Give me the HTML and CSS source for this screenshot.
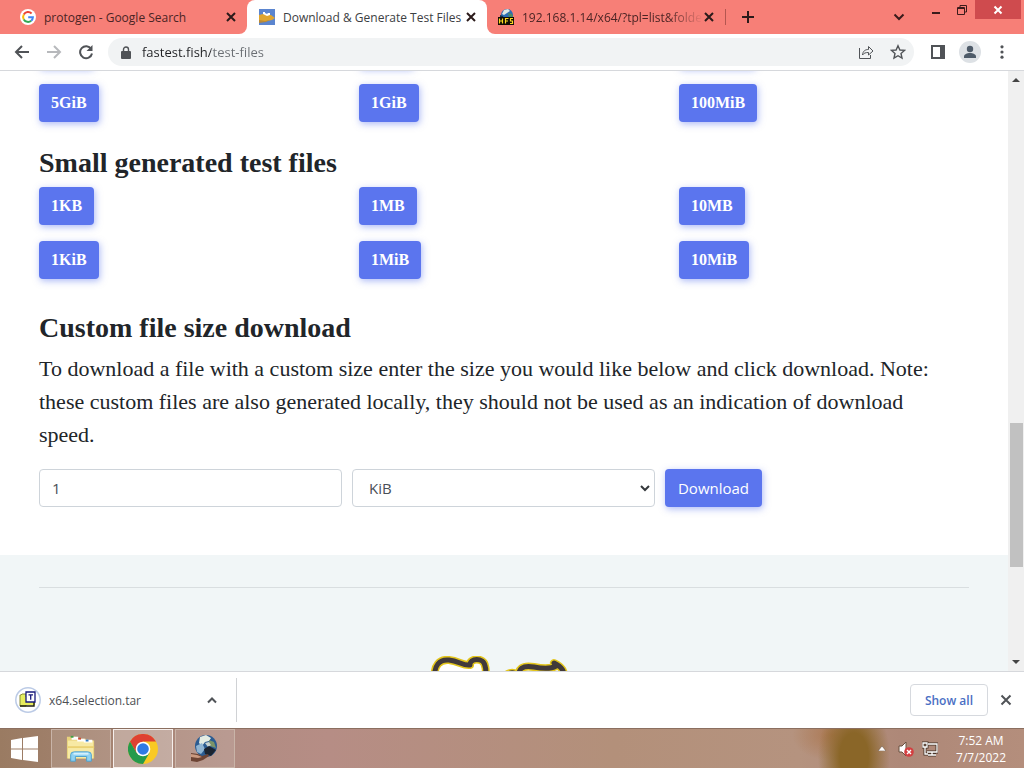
FILE: index.html
```html
<!DOCTYPE html>
<html lang="en">
<head>
<meta charset="utf-8">
<meta name="viewport" content="width=device-width, initial-scale=1">
<title>Download &amp; Generate Test Files</title>
<link rel="stylesheet" href="styles.css">
</head>
<body>
<header class="tabstrip">
  <div class="tabs">
    <div class="tab">
      <svg class="favicon" viewBox="0 0 16 16"><circle cx="8" cy="8" r="8" fill="#fff"/><g fill="none" stroke-width="2"><path d="M3.800 5.500A4.900 4.900 0 0 1 11.600 4.500" stroke="#ea4335"/><path d="M3.800 5.500A4.900 4.900 0 0 0 3.800 10.500" stroke="#fbbc05"/><path d="M3.800 10.500A4.900 4.900 0 0 0 11.200 11.700" stroke="#34a853"/><path d="M11.200 11.700A4.900 4.900 0 0 0 12.900 8.200H8.200" stroke="#4285f4"/></g></svg>
      <span class="tab-title">protogen - Google Search</span>
      <button class="tab-close" aria-label="Close tab"><svg viewBox="0 0 10 10"><path d="M1 1l8 8M9 1l-8 8"/></svg></button>
    </div>
    <div class="tab tab-active">
      <svg class="favicon" viewBox="0 0 16 16"><path fill="#5b85cf" d="M0 0h16v16H0z"/><path fill="#e0a52e" d="M0 6l4-1 4 1h4l4 3-3 2-5 1-8 1z"/><path fill="#b98a38" d="M0 11l6 1 5-1-4 2-7 1z"/><path fill="#fff" d="M4 3h2v1l2 1 1-1h2v2l-3 1-4-2z"/></svg>
      <span class="tab-title">Download &amp; Generate Test Files</span>
      <button class="tab-close" aria-label="Close tab"><svg viewBox="0 0 10 10"><path d="M1 1l8 8M9 1l-8 8"/></svg></button>
    </div>
    <div class="tab tab-last">
      <svg class="favicon" viewBox="0 0 16 16"><circle cx="9" cy="6" r="6" fill="#2c6db4"/><path fill="#dfe9e4" d="M6 1l4-1 2 2-3 2-3 2-2-1z"/><path fill="#4b8b62" d="M10 4l4 1 1 3h-4z"/><path fill="#12304d" d="M2 6l3 1 1 3H2z"/><path fill="#100c04" d="M0 8h16v8H0z"/><path d="M1.500 9.500v5M4.500 9.500v5M1.500 12h3M7.500 14.500v-5h3M7.500 12h2.500M15 9.500h-2.500v2.500h2v2.500h-2.500" fill="none" stroke="#ffd91f" stroke-width="1.200"/></svg>
      <span class="tab-title tab-fade">192.168.1.14/x64/?tpl=list&amp;folde</span>
      <button class="tab-close" aria-label="Close tab"><svg viewBox="0 0 10 10"><path d="M1 1l8 8M9 1l-8 8"/></svg></button>
    </div>
    <button class="new-tab" aria-label="New tab"><svg viewBox="0 0 12 12"><path d="M6 0v12M0 6h12"/></svg></button>
  </div>
  <div class="window-controls">
    <button class="tab-search" aria-label="Search tabs"><svg viewBox="0 0 12 8"><path d="M1.500 1.500L6 6l4.500-4.500"/></svg></button>
    <button class="win-btn" aria-label="Minimize"><svg viewBox="0 0 12 12"><path d="M2 9h8"/></svg></button>
    <button class="win-btn" aria-label="Restore"><svg class="thin" viewBox="0 0 12 12"><path d="M1.500 3.500h7v7h-7zM1.500 4.500h7M4 3V1.500h6.500V8H9"/></svg></button>
    <button class="win-btn win-close" aria-label="Close"><svg viewBox="0 0 12 12"><path d="M2.500 2.500l7 7M9.500 2.500l-7 7"/></svg></button>
  </div>
</header>

<nav class="toolbar" aria-label="Navigation">
  <button class="tool" aria-label="Back"><svg viewBox="0 0 16 16"><path d="M15 8H2M8 2L2 8l6 6"/></svg></button>
  <button class="tool tool-off" aria-label="Forward"><svg viewBox="0 0 16 16"><path d="M1 8h13M8 2l6 6-6 6"/></svg></button>
  <button class="tool" aria-label="Reload"><svg viewBox="0 0 16 16"><path d="M13.200 5A6 6 0 1 0 14 9.500"/><path d="M14.500 1v6h-6z" fill="#505357" stroke="none"/></svg></button>
  <div class="omnibox">
    <svg class="lock" viewBox="0 0 10 13"><path fill="#4f5256" d="M1 5h8a1 1 0 0 1 1 1v6a1 1 0 0 1-1 1H1a1 1 0 0 1-1-1V6a1 1 0 0 1 1-1z"/><path d="M2.500 5V3.500a2.500 2.500 0 0 1 5 0V5" fill="none" stroke="#4f5256" stroke-width="1.400"/></svg>
    <input class="url" type="text" aria-label="Address" value="fastest.fish/test-files">
    <button class="tool" aria-label="Share"><svg class="thin" viewBox="0 0 16 16"><path d="M1.500 4v10.500h11V11M4.500 11c.4-4 2.600-5.500 6-5.500V2.500L15 7l-4.500 4V8.500c-3 0-4.700.6-6 2.500z"/></svg></button>
    <button class="tool" aria-label="Bookmark"><svg viewBox="0 0 16 16"><path d="M8 1.800l1.900 4.200 4.600.4-3.500 3.100 1 4.600L8 11.700l-4 2.400 1-4.600L1.500 6.400l4.600-.4z" stroke-width="1.400"/></svg></button>
  </div>
  <button class="tool" aria-label="Side panel"><svg viewBox="0 0 16 16"><path d="M2 2h12v12H2z"/><path d="M10 1h5v14h-5z" fill="#505357" stroke="none"/></svg></button>
  <button class="tool avatar" aria-label="Profile"><svg viewBox="0 0 22 22"><circle cx="11" cy="11" r="11" fill="#dde1e5"/><circle cx="11" cy="8" r="3.200" fill="#4e5b69"/><path d="M5 17v-1.500c0-2.300 3-3.500 6-3.500s6 1.200 6 3.500V17z" fill="#4e5b69"/></svg></button>
  <button class="tool" aria-label="Menu"><svg viewBox="0 0 16 16"><g fill="#505357" stroke="none"><circle cx="8" cy="2.800" r="1.600"/><circle cx="8" cy="8" r="1.600"/><circle cx="8" cy="13.200" r="1.600"/></g></svg></button>
</nav>

<div class="viewport">
  <main class="page">
    <section class="content">
      <div class="grid grid-cut" aria-hidden="true">
        <div><span class="cut-btn"></span></div><div><span class="cut-btn"></span></div><div><span class="cut-btn cut-wide"></span></div>
      </div>
      <div class="grid">
        <div><a class="btn" href="#5gib">5GiB</a></div>
        <div><a class="btn" href="#1gib">1GiB</a></div>
        <div><a class="btn" href="#100mib">100MiB</a></div>
      </div>
      <h2 class="heading">Small generated test files</h2>
      <div class="grid">
        <div><a class="btn" href="#1kb">1KB</a></div>
        <div><a class="btn" href="#1mb">1MB</a></div>
        <div><a class="btn" href="#10mb">10MB</a></div>
        <div><a class="btn" href="#1kib">1KiB</a></div>
        <div><a class="btn" href="#1mib">1MiB</a></div>
        <div><a class="btn" href="#10mib">10MiB</a></div>
      </div>
      <h2 class="heading heading-custom">Custom file size download</h2>
      <p class="lead">To download a file with a custom size enter the size you would like below and click download. Note: these custom files are also generated locally, they should not be used as an indication of download speed.</p>
      <form class="size-form">
        <input class="field" type="text" aria-label="File size" value="1">
        <div class="select-wrap">
          <select class="field select" aria-label="Unit"><option>KiB</option></select>
          <svg class="chevron" viewBox="0 0 10 7"><path d="M1 1l4 4 4-4"/></svg>
        </div>
        <button class="btn btn-ui" type="button">Download</button>
      </form>
    </section>
    <footer class="footer">
      <hr class="rule">
      <svg class="logo" viewBox="0 0 146 50" aria-hidden="true">
        <g stroke-linejoin="round" stroke-linecap="round">
          <path fill="#fff" d="M4 24C2 9 9 3 18 4c10 1 14 6 21 5-1-7 14-8 15 1 2 5 0 9 0 14z"/>
          <g fill="none" stroke="#e3c51d" stroke-width="8"><path d="M4 24C2 9 9 3 18 4c10 1 14 6 21 5-1-7 14-8 15 1 2 5 0 9 0 14"/><path d="M74 22c1-5 8-7 12-3M88 24C86 12 92 9 103 11c10 2 17 2 22-1l-2-3c8 4 11 8 10 17"/></g>
          <g fill="none" stroke="#41393a" stroke-width="5"><path d="M4 24C2 9 9 3 18 4c10 1 14 6 21 5-1-7 14-8 15 1 2 5 0 9 0 14"/><path d="M74 22c1-5 8-7 12-3M88 24C86 12 92 9 103 11c10 2 17 2 22-1l-2-3c8 4 11 8 10 17"/></g>
          <path d="M62 17h6" stroke="#e9a366" stroke-width="3"/>
        </g>
      </svg>
    </footer>
  </main>
  <div class="scrollbar" aria-hidden="true">
    <svg class="arrow" viewBox="0 0 8 4"><path d="M0 4l4-4 4 4z"/></svg>
    <div class="track"><div class="thumb"></div></div>
    <svg class="arrow" viewBox="0 0 8 4"><path d="M0 0l4 4 4-4z"/></svg>
  </div>
</div>

<section class="downloads" aria-label="Downloads">
  <div class="download">
    <svg class="file-icon" viewBox="0 0 26 26"><circle cx="13" cy="13" r="12.200" fill="#fff" stroke="#bccbe6" stroke-width="1.500"/><path d="M5 8h1l1-1h4v12H5z" fill="#e3ef62" stroke="#8a8c3a"/><path d="M7 10h13v8H7z" fill="#e8ec5c"/><path d="M5 19h14v-4" fill="none" stroke="#20200e" stroke-width="1.400"/><path d="M11 5h9v10h-9z" fill="#fff" stroke="#16187c" stroke-width="1.300"/><path d="M13.500 7.800h4.500M15.700 7.800v5" stroke="#16187c" stroke-width="1.300"/></svg>
    <span class="download-name">x64.selection.tar</span>
    <button class="tool" aria-label="Download options"><svg viewBox="0 0 16 16"><path d="M4 10.500l4-4 4 4"/></svg></button>
  </div>
  <button class="show-all">Show all</button>
  <button class="tool" aria-label="Close downloads bar"><svg viewBox="0 0 16 16"><path d="M3.500 3.500l9 9M12.500 3.500l-9 9"/></svg></button>
</section>

<footer class="taskbar">
  <button class="start" aria-label="Start"><svg viewBox="0 0 27 26"><path fill="#fff" d="M0 4l11-2v10.500H0zM12 2l15-2v12.500H12zM0 13.500h11V24L0 22zM12 13.500h15V26l-15-2z"/></svg></button>
  <button class="task" aria-label="File Explorer"><svg viewBox="0 0 32 30"><path fill="#e8d27c" d="M1 2h9l1 2h10l1 2h8v19H1z"/><path fill="#f7e9a4" d="M2 6h27v19H2z"/><path fill="#fff" d="M6 2h7v3H6zM12 4h8v3h-8zM19 5h9v3h-9z"/><path fill="#42a047" d="M5 1h3v2H5z"/><path fill="#d14b32" d="M13 3h3v2h-3z"/><path fill="#347bc1" d="M21 5h3v2h-3z"/><path fill="#ead173" d="M2 12h28v2H2z"/><path d="M5 28v-7q0-3 4-3h14q4 0 4 3v7h-5v-5H10v5z" fill="#8fd2f2" stroke="#4b9fcd"/><path fill="#d4f0fc" d="M8 19h16v2H8z"/></svg></button>
  <button class="task task-active" aria-label="Chrome"><svg viewBox="0 0 30 30"><circle cx="15" cy="15" r="15" fill="#f9c923"/><path fill="#df4032" d="M2 7.500A15 15 0 0 1 28 7.500H15L8.500 19z"/><path fill="#269a4c" d="M2 7.500A15 15 0 0 0 15 30l6.500-11.200L15 22l-6.500-3.300z"/><circle cx="15" cy="15" r="7.300" fill="#fff"/><circle cx="15" cy="15" r="5.800" fill="#2f7ae5"/></svg></button>
  <button class="task" aria-label="HFS"><svg viewBox="0 0 30 30"><circle cx="16" cy="12" r="11" fill="#2b5c92"/><path fill="#e4ece3" d="M10 3l6-2 5 3-2 3-4 1-3 4-3-3z"/><path fill="#8fb4d2" d="M6 12l6-3 3 6-4 5-4-2z"/><path fill="#7d9468" d="M19 6l5 2 2 6-6-2z"/><path fill="#c8d3cf" d="M15 9l4-1 2 3-3 2z"/><path fill="#1b2430" d="M14 15l5-3 7 4-5 6-6-2z"/><path fill="#6d4434" d="M1 19l7 1 4 2 6-2 1 2-6 4-6 2-6-1z"/><path fill="#cb9a80" d="M1 20l6 1 5 2-4 1-7-1z"/></svg></button>
  <div class="tray">
    <svg class="tray-up" viewBox="0 0 8 5"><path fill="#fff" stroke="#5c4638" stroke-width=".5" d="M0 5l4-5 4 5z"/></svg>
    <svg class="tray-icon" viewBox="0 0 16 16"><path d="M1 5h3l4-4v14l-4-4H1z" fill="#fff" stroke="#68503f"/><circle cx="11" cy="11" r="4.800" fill="#d33f40"/><path d="M9 9l4 4M13 9l-4 4" stroke="#fff" stroke-width="1.400"/></svg>
    <svg class="tray-icon" viewBox="0 0 16 16"><g fill="none" stroke="#473428" stroke-width="3"><path d="M6 3h9v8H5M10 11v3M6 14h8M1 2h4v4H1zM3 6v7h3"/></g><g fill="none" stroke="#fff" stroke-width="1.300"><path d="M6 3h9v8H5M10 11v3M6 14h8M1 2h4v4H1zM3 6v7h3"/></g></svg>
    <div class="clock"><span>7:52 AM</span><span>7/7/2022</span></div>
  </div>
</footer>
</body>
</html>
```
FILE: styles.css
```css
* { box-sizing: border-box; }
body {
  margin: 0;
  height: 100vh;
  display: flex;
  flex-direction: column;
  overflow: hidden;
  background: #fff;
  color: #212529;
  font-family: "Segoe UI", "Open Sans", sans-serif;
  font-size: 12px;
}
button {
  border: 0;
  padding: 0;
  background: none;
  color: inherit;
  font: inherit;
}
svg { display: block; flex: none; }

/* tab strip */
.tabstrip {
  flex: none;
  display: flex;
  justify-content: space-between;
  height: 34px;
  background: #f77f77;
}
.tabs {
  display: flex;
  flex: 1;
  min-width: 0;
  background: linear-gradient(#fff, #fff) 230px 24px / 270px 10px no-repeat;
}
.tab {
  flex: 0 1 240px;
  min-width: 0;
  display: flex;
  align-items: center;
  padding: 0 10px 0 12px;
  background: #f77f77;
  color: #4b2424;
}
.tab:first-child { flex-basis: 247px; padding-left: 20px; border-radius: 0 0 8px 0; }
.tab-active { background: #fff; border-radius: 8px 8px 0 0; color: #3c4043; }
.tab-last { flex-basis: 238px; padding-left: 11px; border-radius: 0 0 0 8px; }
.favicon { width: 16px; height: 16px; margin-right: 8px; }
.tab-title { flex: 1; min-width: 0; overflow: hidden; white-space: nowrap; }
.tab-fade { mask-image: linear-gradient(to right, #000 80%, transparent); }
.tab-close { width: 12px; height: 12px; display: grid; place-items: center; }
.tab-close svg { width: 10px; height: 10px; }
.tab-close path, .new-tab path { fill: none; stroke: #2b1a1a; stroke-width: 2; }
.new-tab {
  align-self: center;
  height: 16px;
  padding: 0 16px;
  border-left: 1px solid #b45650;
}
.new-tab svg { width: 12px; height: 12px; }
.window-controls { display: flex; align-items: flex-start; padding-right: 3px; }
.tab-search { height: 34px; padding: 0 18px; }
.tab-search svg { width: 12px; height: 8px; }
.win-btn { width: 26px; height: 19px; display: grid; place-items: center; }
.win-btn svg { width: 12px; height: 12px; }
.window-controls path { fill: none; stroke: #3a1b1b; stroke-width: 2; }
.window-controls .thin path { stroke-width: 1; }
.win-close { width: 46px; background: #cf4b4e; }
.window-controls .win-close path { stroke: #fff; }

/* toolbar */
.toolbar {
  flex: none;
  display: flex;
  align-items: center;
  gap: 8px;
  height: 37px;
  padding: 0 10px;
  border-bottom: 1px solid #d6d8dc;
}
.tool { width: 24px; height: 24px; display: grid; place-items: center; }
.tool svg { width: 16px; height: 16px; fill: none; stroke: #505357; stroke-width: 2; }
.tool .thin { stroke-width: 1; }
.tool-off svg { stroke: #b7b9bc; }
.avatar svg { width: 22px; height: 22px; stroke: none; }
.omnibox {
  flex: 1;
  display: flex;
  align-items: center;
  gap: 8px;
  height: 28px;
  margin: 0 4px 0 2px;
  padding: 0 4px 0 13px;
  border-radius: 14px;
  background: #f1f3f4;
}
.lock { width: 10px; height: 13px; }
.url {
  flex: 1;
  min-width: 0;
  height: 24px;
  padding: 0 0 0 3px;
  border: 0;
  outline: 0;
  font: 13px "Segoe UI", "Open Sans", sans-serif;
  color: #202124;
  background: linear-gradient(to right, #202124 72px, #6a6e73 72px);
  background-clip: text;
  -webkit-background-clip: text;
  -webkit-text-fill-color: transparent;
}

/* page */
.viewport { flex: 1; min-height: 0; display: flex; }
.page { flex: 1; min-width: 0; display: flex; flex-direction: column; overflow: hidden; }
.content { flex: none; padding: 0 39px 48px; }
.grid { display: grid; grid-template-columns: repeat(3, 1fr); gap: 16px 30px; }
.grid-cut { height: 38px; margin: -41px 0 16px; }
.btn, .cut-btn {
  display: inline-block;
  height: 38px;
  border-radius: 4px;
  background: #5b75ee;
  box-shadow: 1px 2px 7px rgba(91, 117, 238, .5);
}
.cut-btn { width: 54px; }
.cut-wide { width: 76px; }
.btn {
  padding: 0 12px;
  color: #fff;
  font: bold 16px/38px Georgia, "Liberation Serif", serif;
  text-decoration: none;
  vertical-align: top;
}
.btn-ui { padding: 0 13px; font: 15px/38px "Segoe UI", "Open Sans", sans-serif; }
.heading {
  margin: 24px 0 8px;
  font: bold 28px/33px "Liberation Serif", serif;
}
.heading-custom { margin-top: 32px; }
.lead {
  margin: 0 0 18px;
  padding-right: 16px;
  font: 22px/33px Georgia, "Liberation Serif", serif;
}
.size-form { display: flex; gap: 10px; }
.field {
  flex: 0 0 calc(33.333% - 7px);
  min-width: 0;
  height: 38px;
  padding: 0 12px;
  border: 1px solid #ced4da;
  border-radius: 4px;
  background: #fff;
  color: #495057;
  font: 15px "Segoe UI", "Open Sans", sans-serif;
}
.select-wrap { position: relative; flex: 0 0 calc(33.333% - 7px); }
.select { width: 100%; padding: 0 16px; appearance: none; }
.chevron { position: absolute; right: 5px; top: 16px; width: 10px; height: 7px; pointer-events: none; }
.chevron path { fill: none; stroke: #34383c; stroke-width: 2; }
.footer { flex: 1 0 auto; padding: 32px 39px 0; background: #f1f6f7; }
.rule { margin: 0 0 68px; border: 0; border-top: 1px solid #d9dee0; }
.logo { width: 146px; height: 50px; margin: 0 auto; }
.scrollbar {
  flex: 0 0 16px;
  display: flex;
  flex-direction: column;
  align-items: center;
  padding: 7px 0;
  background: #f0f0f0;
}
.arrow { width: 8px; height: 4px; fill: #444; }
.track { flex: 1; width: 13px; display: flex; flex-direction: column; }
.thumb { margin-top: 341px; height: 144px; background: #c1c1c1; }

/* downloads */
.downloads {
  flex: none;
  display: flex;
  align-items: center;
  gap: 6px;
  height: 57px;
  padding: 0 6px 0 15px;
  border-top: 1px solid #d6d8dc;
  background: #fff;
}
.download {
  flex: 0 0 222px;
  display: flex;
  align-items: center;
  gap: 8px;
  height: 44px;
  padding-right: 12px;
  border-right: 1px solid #d0d2d5;
  color: #4d5054;
}
.file-icon { width: 26px; height: 26px; }
.download-name { flex: 1; }
.show-all {
  height: 32px;
  margin-left: auto;
  padding: 0 14px;
  border: 1px solid #d6d9de;
  border-radius: 4px;
  color: #4a6fc4;
  font-weight: 600;
}

/* taskbar */
.taskbar {
  flex: none;
  display: flex;
  gap: 2px;
  height: 40px;
  border-top: 1px solid #8b6f60;
  background:
    radial-gradient(ellipse 36px 60px at 854px 28px, #8a6628 40%, transparent),
    radial-gradient(ellipse 40px 26px at 832px 6px, rgba(168, 106, 56, .6), transparent),
    linear-gradient(to right, #9a7b62, #b08c82 22%, #b68d85 32%, #b3907a 60%, #b5937f 78%, #ae8878 88%, #b48e7c);
}
.start { width: 49px; display: grid; place-items: center; }
.start svg { width: 27px; height: 26px; }
.task {
  width: 60px;
  display: grid;
  place-items: center;
  border: 1px solid #c9b4a8;
  background: rgba(255, 255, 255, .12);
}
.task svg { width: 30px; height: 30px; }
.task-active { border-color: #f6efec; background: rgba(255, 255, 255, .3); }
.tray { margin-left: auto; display: flex; align-items: center; gap: 8px; padding-right: 18px; color: #fff; }
.tray-up { width: 8px; height: 5px; margin-right: 4px; }
.tray-icon { width: 16px; height: 16px; }
.clock { display: flex; flex-direction: column; align-items: center; padding-left: 10px; line-height: 17px; }
```
